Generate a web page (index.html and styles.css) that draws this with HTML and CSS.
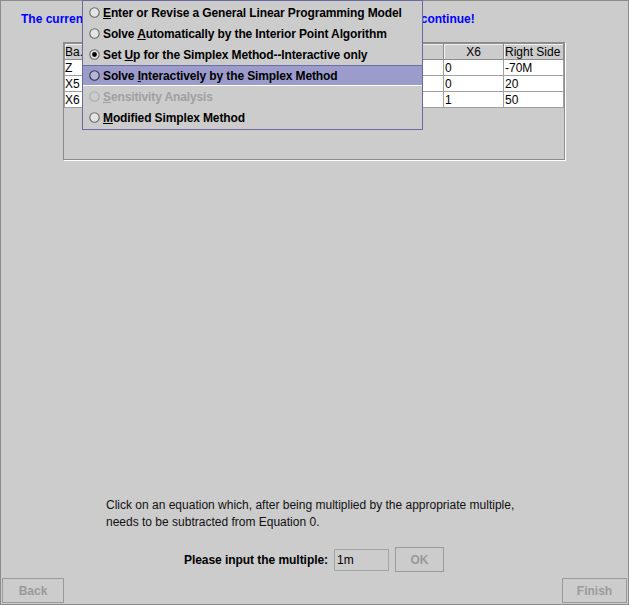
FILE: index.html
```html
<!DOCTYPE html>
<html>
<head>
<meta charset="utf-8">
<title>Simplex Method</title>
<link rel="stylesheet" href="styles.css">
</head>
<body>
<div class="frame">
  <div class="title">The current basic solution is not optimal. Click on the 'Next' button to continue!</div>

  <div class="table-wrap">
    <table class="tableau">
      <colgroup>
        <col class="c-ba">
        <col class="c-n"><col class="c-n"><col class="c-n"><col class="c-n">
        <col class="c-n"><col class="c-n"><col class="c-n"><col class="c-n">
      </colgroup>
      <thead>
        <tr>
          <th class="left first">Ba.</th>
          <th></th><th></th><th></th><th></th><th></th><th></th><th>X6</th>
          <th class="left">Right Side</th>
        </tr>
      </thead>
      <tbody>
        <tr><td class="first">Z</td><td></td><td></td><td></td><td></td><td></td><td></td><td>0</td><td>-70M</td></tr>
        <tr><td class="first">X5</td><td></td><td></td><td></td><td></td><td></td><td></td><td>0</td><td>20</td></tr>
        <tr><td class="first">X6</td><td></td><td></td><td></td><td></td><td></td><td></td><td>1</td><td>50</td></tr>
      </tbody>
    </table>
  </div>

  <div class="bottom">
    <p class="hint">Click on an equation which, after being multiplied by the appropriate multiple,<br>needs to be subtracted from Equation 0.</p>
    <div class="input-row">
      <span class="label">Please input the multiple:</span>
      <span class="field">1m</span>
      <button class="btn ok" disabled>OK</button>
    </div>
    <div class="nav">
      <button class="btn back" disabled>Back</button>
      <button class="btn finish" disabled>Finish</button>
    </div>
  </div>

  <div class="menu">
    <div class="item">
      <svg class="radio" viewBox="0 0 11 11" width="11" height="11"><circle cx="5.5" cy="5.5" r="4.7" fill="#e4e4e4" stroke="#6a6a6a" stroke-width="1.1"/></svg>
      <span><u>E</u>nter or Revise a General Linear Programming Model</span>
    </div>
    <div class="item">
      <svg class="radio" viewBox="0 0 11 11" width="11" height="11"><circle cx="5.5" cy="5.5" r="4.7" fill="#e4e4e4" stroke="#6a6a6a" stroke-width="1.1"/></svg>
      <span>Solve <u>A</u>utomatically by the Interior Point Algorithm</span>
    </div>
    <div class="item">
      <svg class="radio" viewBox="0 0 11 11" width="11" height="11"><circle cx="5.5" cy="5.5" r="4.7" fill="#e4e4e4" stroke="#6a6a6a" stroke-width="1.1"/><circle cx="5.5" cy="5.5" r="2.4" fill="#000"/></svg>
      <span>Set <u>U</u>p for the Simplex Method--Interactive only</span>
    </div>
    <div class="item selected">
      <svg class="radio" viewBox="0 0 11 11" width="11" height="11"><circle cx="5.5" cy="5.5" r="4.7" fill="#b4b4dc" stroke="#333" stroke-width="1.1"/></svg>
      <span>Solve <u>I</u>nteractively by the Simplex Method</span>
    </div>
    <div class="item disabled">
      <svg class="radio" viewBox="0 0 11 11" width="11" height="11"><circle cx="5.5" cy="5.5" r="4.7" fill="none" stroke="#ababab" stroke-width="1.1"/></svg>
      <span><u>S</u>ensitivity Analysis</span>
    </div>
    <div class="item">
      <svg class="radio" viewBox="0 0 11 11" width="11" height="11"><circle cx="5.5" cy="5.5" r="4.7" fill="#e4e4e4" stroke="#6a6a6a" stroke-width="1.1"/></svg>
      <span><u>M</u>odified Simplex Method</span>
    </div>
  </div>
</div>
</body>
</html>
```

FILE: styles.css
```css
html, body {
  margin: 0;
  padding: 0;
  background: #cccccc;
}

body {
  font-family: "Liberation Sans", Arial, sans-serif;
  font-size: 12px;
  color: #000;
}

.frame {
  position: relative;
  width: 629px;
  height: 605px;
  box-sizing: border-box;
  border: 1px solid #8c8c8c;
  display: flex;
  flex-direction: column;
  background: #cccccc;
}

.title {
  margin-top: 11px;
  padding-left: 20px;
  font-weight: bold;
  font-size: 12px;
  line-height: 14px;
  color: #0000ff;
  white-space: nowrap;
}

.table-wrap {
  margin-top: 16px;
  margin-left: 62px;
  width: 502px;
  height: 118px;
  box-sizing: border-box;
  border: 1px solid #8c8c8c;
  box-shadow: 1px 1px 0 #ffffff;
}

.tableau {
  table-layout: fixed;
  border-collapse: collapse;
  width: 499px;
  font-size: 12px;
}

.c-ba { width: 19px; }
.c-n { width: 60px; }

.tableau th {
  height: 15px;
  padding: 0 1px;
  font-weight: normal;
  text-align: center;
  background: #cccccc;
  border: 1px solid #8c8c8c;
  box-shadow: inset 1px 1px 0 #f2f2f2;
  line-height: 14px;
  white-space: nowrap;
  overflow: hidden;
}

.tableau th.left {
  text-align: left;
}

.tableau td {
  height: 15px;
  padding: 0 1px;
  background: #ffffff;
  border: 1px solid #a0a0a0;
  line-height: 14px;
  white-space: nowrap;
  overflow: hidden;
}

.tableau .first {
  padding: 0;
  text-overflow: clip;
}

.bottom {
  margin-top: auto;
  display: flex;
  flex-direction: column;
}

.hint {
  margin: 0 0 16px 105px;
  line-height: 17px;
  font-size: 12px;
  color: #111;
}

.input-row {
  display: flex;
  align-items: center;
  justify-content: center;
  height: 25px;
  margin-bottom: 6px;
  padding-right: 1px;
}

.label {
  font-weight: bold;
  margin-right: 6px;
  letter-spacing: -0.05px;
}

.field {
  width: 55px;
  height: 22px;
  box-sizing: border-box;
  border: 1px solid #a4a4a4;
  padding-left: 2px;
  line-height: 20px;
  margin-right: 6px;
}

.btn {
  font-family: "Liberation Sans", Arial, sans-serif;
  font-size: 12px;
  font-weight: bold;
  color: #9a9a9a;
  background: transparent;
  border: 1px solid #9a9a9a;
  box-sizing: border-box;
  padding: 0;
  margin: 0;
}

.ok {
  width: 49px;
  height: 25px;
}

.nav {
  display: flex;
  justify-content: space-between;
  padding: 0 1px;
  margin-bottom: 1px;
}

.back {
  width: 62px;
  height: 25px;
}

.finish {
  width: 65px;
  height: 25px;
}

.menu {
  position: absolute;
  left: 81px;
  top: -1px;
  width: 341px;
  box-sizing: border-box;
  border: 1px solid #6a6a9c;
  padding: 1px 0;
  background: #cccccc;
}

.item {
  display: flex;
  align-items: center;
  height: 21px;
  padding-left: 6px;
  font-weight: bold;
  font-size: 12px;
  letter-spacing: -0.12px;
  white-space: nowrap;
}

.item .radio {
  flex: none;
  margin-right: 3px;
}

.item u {
  text-underline-offset: 1px;
}

.item.selected {
  background: #9c9ccc;
  box-shadow: inset 0 1px 0 #6e6ea0, inset 0 -1px 0 #ffffff;
}

.item.disabled {
  color: #a0a0a0;
}
```
